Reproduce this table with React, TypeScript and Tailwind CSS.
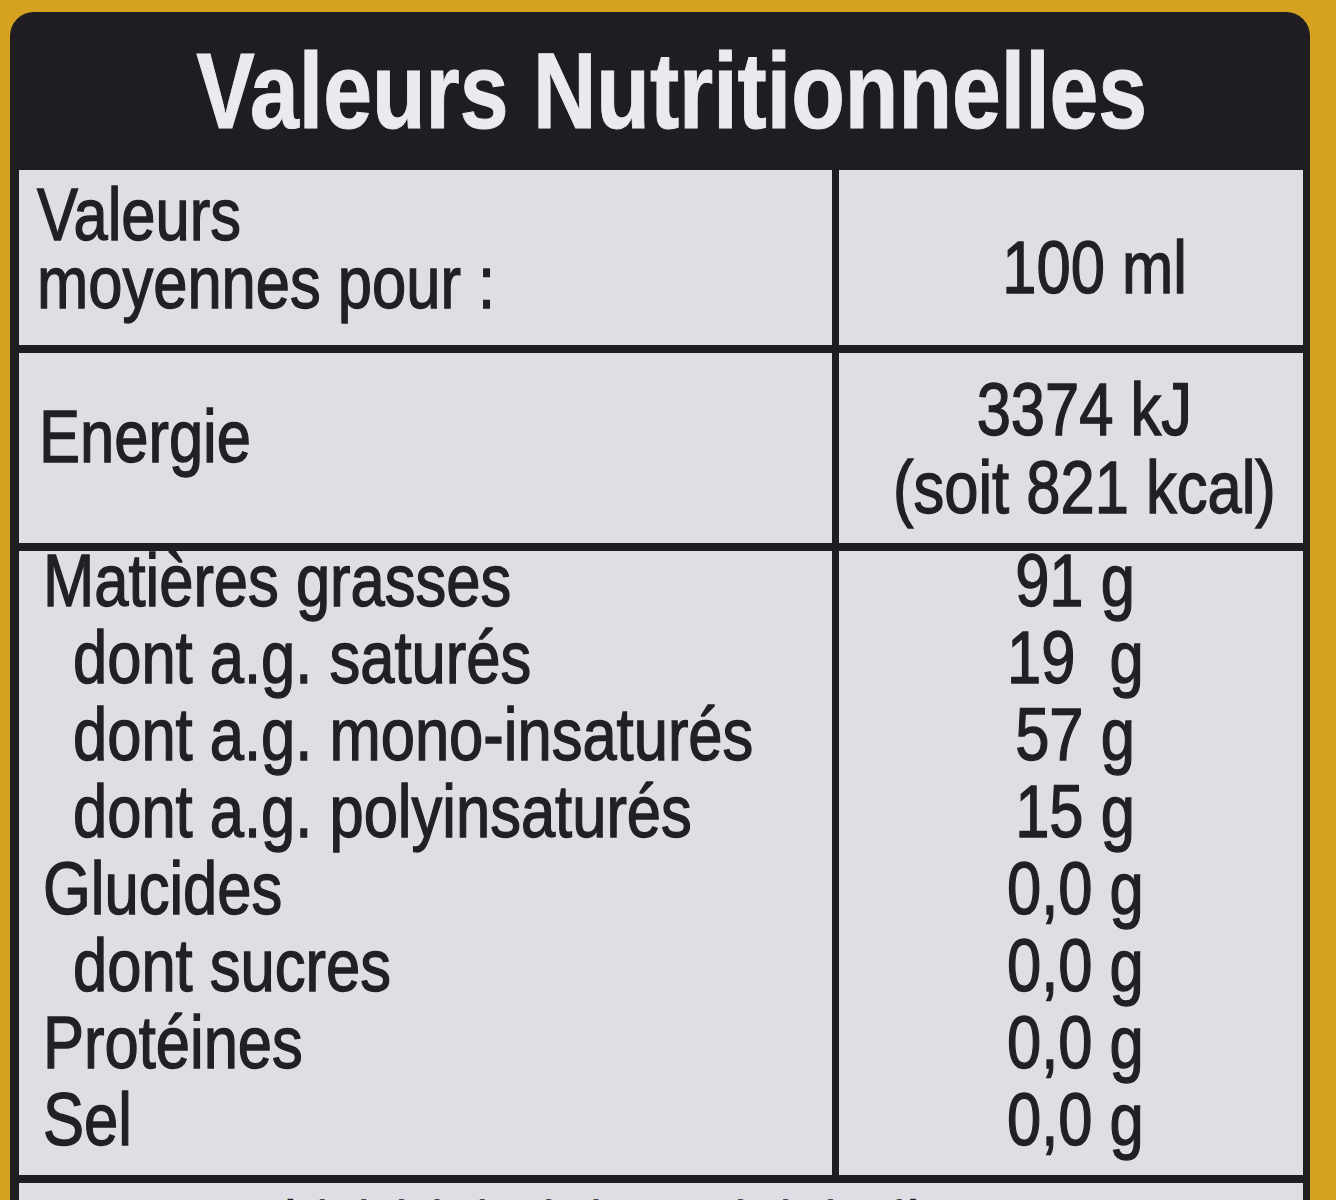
const font = { fontFamily: '"Liberation Sans", Arial, sans-serif' };

type Line = { label: string; value: string; sub?: boolean };

const lines: Line[] = [
  { label: 'Matières grasses', value: '91 g' },
  { label: 'dont a.g. saturés', value: '19  g', sub: true },
  { label: 'dont a.g. mono-insaturés', value: '57 g', sub: true },
  { label: 'dont a.g. polyinsaturés', value: '15 g', sub: true },
  { label: 'Glucides', value: '0,0 g' },
  { label: 'dont sucres', value: '0,0 g', sub: true },
  { label: 'Protéines', value: '0,0 g' },
  { label: 'Sel', value: '0,0 g' },
];

// condensed look: Liberation Sans squeezed horizontally
function L({ children }: { children: React.ReactNode }) {
  return (
    <span className="inline-block whitespace-pre scale-x-[0.82] origin-left">{children}</span>
  );
}

function C({ children }: { children: React.ReactNode }) {
  return (
    <span className="inline-block whitespace-pre scale-x-[0.82] origin-center">{children}</span>
  );
}

export default function App() {
  return (
    <div
      className="w-[1336px] h-[1200px] overflow-hidden bg-[#d5a31f] pt-[12px] pl-[10px] pr-[26px]"
      style={font}
    >
      <div className="bg-[#1f1d21] rounded-t-[24px] h-[1220px] flex flex-col">
        {/* Title band */}
        <div className="h-[158px] shrink-0 flex justify-center pt-[26px] pl-[24px]">
          <h1 className="text-[107px] leading-none font-bold text-[#ebebef] [-webkit-text-stroke:1px_#ebebef]">
            <C>Valeurs Nutritionnelles</C>
          </h1>
        </div>

        {/* Table */}
        <div className="flex flex-col gap-[8px] pl-[9px] pr-[7px] text-[#221f25] text-[75px] shrink-0 [-webkit-text-stroke:1.4px_#221f25]">
          <div className="grid grid-cols-[813px_minmax(0,1fr)] gap-x-[7px] h-[175px] shrink-0">
            <div className="bg-[#dedee4] pl-[18px] pt-[10px] leading-[68px]">
              <div><L>Valeurs</L></div>
              <div><L>moyennes pour :</L></div>
            </div>
            <div className="bg-[#dedee4] flex flex-col items-center pt-[63px] pl-[48px] leading-[68px]">
              <C>100 ml</C>
            </div>
          </div>

          <div className="grid grid-cols-[813px_minmax(0,1fr)] gap-x-[7px] h-[190px] shrink-0">
            <div className="bg-[#dedee4] pl-[20px] pt-[44px] leading-[78px]">
              <L>Energie</L>
            </div>
            <div className="bg-[#dedee4] flex flex-col items-center pt-[17px] pl-[26px] leading-[78px]">
              <C>3374 kJ</C>
              <C>(soit 821 kcal)</C>
            </div>
          </div>

          <div className="grid grid-cols-[813px_minmax(0,1fr)] gap-x-[7px] h-[624px] shrink-0">
            <div className="bg-[#dedee4] pl-[24px] leading-[77px]">
              <div className="-mt-[9px]">
                {lines.map((l) => (
                  <div key={l.label} className={l.sub ? 'pl-[30px]' : ''}>
                    <L>{l.label}</L>
                  </div>
                ))}
              </div>
            </div>
            <div className="bg-[#dedee4] leading-[77px] pl-[8px]">
              <div className="-mt-[9px] flex flex-col items-center">
                {lines.map((l) => (
                  <C key={l.label}>{l.value}</C>
                ))}
              </div>
            </div>
          </div>

          <div className="bg-[#dedee4] h-[120px] shrink-0 pl-[26px] pt-[7px] text-[52px] leading-[60px]">
            <L>A conserver à l&apos;abri de la chaleur et de la lumière</L>
          </div>
        </div>
      </div>
    </div>
  );
}
